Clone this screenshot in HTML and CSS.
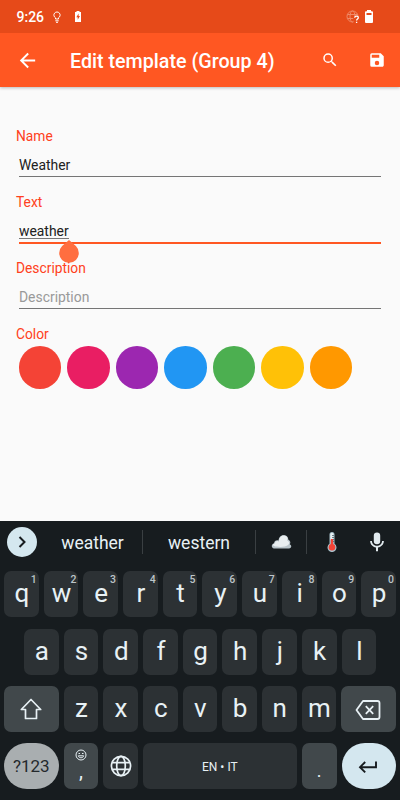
FILE: index.html
```html
<!DOCTYPE html>
<html lang="en">
<head>
  <meta charset="UTF-8">
  <meta name="viewport" content="width=device-width, initial-scale=1.0">
  <title>Edit template</title>
  <link rel="stylesheet" href="styles.css">
</head>
<body>
  <header>
    <div class="status-bar">
      <span class="time">9:26</span>
      <svg class="bulb" width="10" height="12" viewBox="0 0 10 12" fill="none" stroke="#fff" stroke-width="1"><path d="M3.500 8V6.800a3.100 3.100 0 1 1 3 0V8zM3.300 9.800h3.400M4 11.300h2"/></svg>
      <svg class="charge" width="8" height="11" viewBox="0 0 8 11"><path fill="#fff" d="M2.500 0h3v1H7v10H1V1h1.500z"/><path fill="#e64a19" d="M4.600 2.500L2.300 6.300h1.400v2.500L6 5H4.600z"/></svg>
      <svg class="network" width="15" height="14" viewBox="0 0 15 14" fill="none"><g stroke="#ef8a69"><circle cx="6.500" cy="6.500" r="5.500"/><ellipse cx="6.500" cy="6.500" rx="2.500" ry="5.500"/><path d="M1.500 4.500h10M1.500 8.500h6"/></g><path stroke="#e64a19" stroke-width="3" d="M9 8h4v5H9z"/><path stroke="#fff" stroke-width="1.300" d="M8.700 7.700c.1-2.200 3.700-2 3.600.1 0 1.300-1.700 1.300-1.700 2.800M10.600 11.700v1.300"/></svg>
      <svg width="8" height="13" viewBox="0 0 8 13"><path fill="#fff" d="M2 0h4v1.300h1a1 1 0 0 1 1 1V12a1 1 0 0 1-1 1H1a1 1 0 0 1-1-1V2.300a1 1 0 0 1 1-1h1z"/><path fill="#e64a19" d="M1.500 3h5v2h-5z"/></svg>
    </div>
    <div class="toolbar">
      <svg width="23" height="23" viewBox="0 0 24 24" fill="#fff"><path d="M20 11H7.830l5.590-5.590L12 4l-8 8 8 8 1.410-1.410L7.830 13H20z"/></svg>
      <h1>Edit template (Group 4)</h1>
      <svg class="search" width="18" height="18" viewBox="0 0 24 24" fill="#fff"><path d="M15.500 14h-.79l-.28-.27A6.470 6.470 0 0 0 16 9.500 6.500 6.500 0 1 0 9.500 16c1.610 0 3.090-.59 4.230-1.570l.27.28v.79l5 4.990L20.490 19zm-6 0a4.500 4.500 0 1 1 0-9 4.500 4.500 0 0 1 0 9z"/></svg>
      <svg width="18" height="18" viewBox="0 0 24 24" fill="#fff"><path d="M17 3H5a2 2 0 0 0-2 2v14a2 2 0 0 0 2 2h14c1.100 0 2-.9 2-2V7zm-5 16a3 3 0 1 1 0-6 3 3 0 0 1 0 6zm3-10H5V5h10z"/></svg>
    </div>
  </header>

  <main>
    <div class="field">
      <label>Name</label>
      <div class="input">Weather</div>
    </div>
    <div class="field">
      <label>Text</label>
      <div class="input focused"><span class="composing">weather<svg class="handle" width="20" height="23" viewBox="0 0 20 23"><path fill="#ff6e40" d="M10 0l6.900 6.100a9.800 9.800 0 1 1-13.800 0z"/></svg></span></div>
    </div>
    <div class="field">
      <label class="above">Description</label>
      <div class="input placeholder">Description</div>
    </div>
    <div class="field">
      <label>Color</label>
      <div class="colors">
        <span class="swatch red"></span>
        <span class="swatch pink"></span>
        <span class="swatch purple"></span>
        <span class="swatch blue"></span>
        <span class="swatch green"></span>
        <span class="swatch amber"></span>
        <span class="swatch orange"></span>
      </div>
    </div>
  </main>

  <section class="keyboard">
    <div class="suggestions">
      <div class="expand"><svg width="30" height="30" viewBox="0 0 30 30" fill="none" stroke="#171c1f" stroke-width="2"><path d="M12.500 10l5 5-5 5"/></svg></div>
      <div class="word first">weather</div>
      <div class="word second">western</div>
      <div class="word cloud"><svg width="21" height="16" viewBox="0 0 21 16"><path fill="#b9c4ca" d="M3 14.500C0 14 0 10 3 9.500c0-3 3-4 4.500-3C8 2 11 .8 13 1.200c3 .1 4.500 2.300 4.200 4.300 2.800 1.500 2.300 4 1.500 4.700 2.500 1 1.800 4-.7 4.300z"/><path fill="#e8edef" d="M3 12C1 11 2 9.500 4 9.500c0-2.500 3-3 4-1.800C8 3 11 1 13.500 1.600c2.800.5 3.500 2.700 2.700 4.900 2 .5 2.500 2.500 1.200 4.200C14 13.500 7 13.300 3 12z"/></svg></div>
      <div class="word thermo"><svg width="10" height="20" viewBox="0 0 10 20"><path fill="#a9c1cb" d="M2.500 2.500a2.500 2.500 0 0 1 5 0v9.300a4.500 4.500 0 1 1-5 0z"/><path fill="#e8f1f4" d="M3.400 2.500c0-2 3-2 3 0V8h-3z"/><path stroke="#f44336" stroke-width="2.400" d="M5 7v8"/><circle cx="5" cy="15.300" r="3.300" fill="#f44336"/><path stroke="#52636b" stroke-width=".8" d="M5 3.500h2M5 5.500h2M6 7.500h1.500M6 9.500h1.500"/></svg></div>
      <div class="mic"><svg width="22" height="22" viewBox="0 0 24 24" fill="#e1eaee"><path d="M12 14.500a3.500 3.500 0 0 0 3.500-3.500V5a3.500 3.500 0 0 0-7 0v6a3.500 3.500 0 0 0 3.500 3.500zm5.500-3.500c0 3-2.500 5.200-5.500 5.200S6.500 14 6.500 11h-2c0 3.600 2.800 6.600 6.400 7.100V22h2.200v-3.900c3.600-.5 6.400-3.500 6.400-7.100z"/></svg></div>
    </div>

    <div class="row">
      <div class="key">q<sup>1</sup></div>
      <div class="key">w<sup>2</sup></div>
      <div class="key">e<sup>3</sup></div>
      <div class="key">r<sup>4</sup></div>
      <div class="key">t<sup>5</sup></div>
      <div class="key">y<sup>6</sup></div>
      <div class="key">u<sup>7</sup></div>
      <div class="key">i<sup>8</sup></div>
      <div class="key">o<sup>9</sup></div>
      <div class="key">p<sup>0</sup></div>
    </div>
    <div class="row middle">
      <div class="key">a</div>
      <div class="key">s</div>
      <div class="key">d</div>
      <div class="key">f</div>
      <div class="key">g</div>
      <div class="key">h</div>
      <div class="key">j</div>
      <div class="key">k</div>
      <div class="key">l</div>
    </div>
    <div class="row">
      <div class="key wide special icon"><svg width="24" height="24" viewBox="0 0 24 24" fill="none" stroke="#e8f1f5" stroke-width="1.700" stroke-linejoin="round"><path d="M12 2.500L2.300 12.500h4.200v9h11v-9h4.200z"/></svg></div>
      <div class="key">z</div>
      <div class="key">x</div>
      <div class="key">c</div>
      <div class="key">v</div>
      <div class="key">b</div>
      <div class="key">n</div>
      <div class="key">m</div>
      <div class="key wide special icon"><svg class="backspace" width="26" height="22" viewBox="0 0 26 22" fill="none" stroke="#e8f1f5" stroke-width="1.800" stroke-linejoin="round"><path d="M8 2h14.500a2 2 0 0 1 2 2v14a2 2 0 0 1-2 2H8l-6.500-9z"/><path d="M10.800 7.200l7.400 7.600M18.200 7.200l-7.400 7.600"/></svg></div>
    </div>
    <div class="row">
      <div class="key wide symbols">?123</div>
      <div class="key special comma">
        <svg width="12" height="12" viewBox="0 0 12 12" fill="none" stroke="#e8f1f5"><circle cx="6" cy="6" r="5"/><path d="M3.300 6.800c.6 2.600 4.800 2.600 5.400 0zM3.500 4.500h1.500M7 4.500h1.500"/></svg>
        <span>,</span>
      </div>
      <div class="key icon"><svg width="22" height="22" viewBox="0 0 22 22" fill="none" stroke="#e8f1f5" stroke-width="1.700"><circle cx="11" cy="11" r="9.600"/><ellipse cx="11" cy="11" rx="4.300" ry="9.600"/><path d="M2.200 7.700h17.600M2.200 14.300h17.600"/></svg></div>
      <div class="key space">EN • IT</div>
      <div class="key special dot">.</div>
      <div class="key wide enter"><svg width="20" height="14" viewBox="0 0 20 14" fill="none" stroke="#171c1f" stroke-width="1.900"><path d="M18 1.500v5.700H2.500M7.200 2L2 7.200l5.200 5.200"/></svg></div>
    </div>
  </section>
</body>
</html>
```
FILE: styles.css
```css
* {
  margin: 0;
  padding: 0;
  box-sizing: border-box;
}

body {
  display: flex;
  flex-direction: column;
  height: 800px;
  overflow: hidden;
  font-family: Roboto, "Liberation Sans", sans-serif;
  background-color: #fafafa;
  color: #212121;
}

svg {
  display: block;
  flex: none;
}

header {
  color: white;
  box-shadow: 0 1px 3px rgba(0, 0, 0, 0.25);
}

.status-bar {
  display: flex;
  align-items: center;
  height: 33px;
  padding: 0 27px 0 16.5px;
  background-color: #e64a19;
}

.time {
  width: 27.5px;
  padding-top: 1px;
  font-size: 14px;
  font-weight: 500;
  white-space: nowrap;
}

.bulb {
  margin-left: 8px;
}

.charge {
  margin-left: 12px;
}

.network {
  margin-left: auto;
  margin-right: 4px;
}

.toolbar {
  display: flex;
  align-items: center;
  height: 54px;
  padding: 0 14.5px 0 15.5px;
  background-color: #ff5722;
}

h1 {
  margin-left: 31.5px;
  padding-top: 2px;
  font-size: 19.7px;
  font-weight: 500;
  white-space: nowrap;
}

.search {
  margin-left: auto;
  margin-right: 28.5px;
}

main {
  flex: 1;
  padding: 40px 16px 0;
}

.field {
  height: 66px;
}

label {
  display: block;
  height: 18px;
  font-size: 13.8px;
  line-height: 19px;
  color: #ff4020;
}

/* keeps the label readable over the selection handle */
.above {
  position: relative;
}

.input {
  height: 32px;
  margin: 0 3px;
  padding-top: 11px;
  border-bottom: 1px solid #757575;
  font-size: 13.9px;
  line-height: 18px;
}

.focused {
  height: 33px;
  border-bottom: 2px solid #ff5722;
}

.placeholder {
  color: #999;
}

.composing {
  position: relative;
  display: inline-block;
  height: 17px;
  border-bottom: 1px solid #777;
}

.handle {
  position: absolute;
  top: 18px;
  right: -10px;
}

.colors {
  display: flex;
  gap: 6px;
  padding: 3px 2.5px;
}

.swatch {
  width: 42.5px;
  height: 42.5px;
  border-radius: 50%;
}

.red { background-color: #f44336; }
.pink { background-color: #e91e63; }
.purple { background-color: #9c27b0; }
.blue { background-color: #2196f3; }
.green { background-color: #4caf50; }
.amber { background-color: #ffc107; }
.orange { background-color: #ff9800; }

.keyboard {
  display: flex;
  flex-direction: column;
  gap: 11.3px;
  height: 279px;
  padding: 0 4px;
  background-color: #171c1f;
  color: #e8f1f5;
}

.suggestions {
  display: flex;
  align-items: center;
  height: 39px;
  padding: 3px 0 0 3px;
}

.expand {
  width: 30px;
  height: 30px;
  border-radius: 50%;
  background-color: #d4e7ef;
}

.word {
  display: flex;
  align-items: center;
  justify-content: center;
  height: 24px;
  border-right: 1px solid #3a3f42;
  font-size: 17.5px;
}

.first {
  width: 106px;
  padding: 2px 0 0 6px;
}

.second {
  width: 113px;
  padding-top: 2px;
}

.cloud {
  width: 51px;
}

.thermo {
  width: 50px;
  border: none;
}

.mic {
  margin-left: 9px;
}

.row {
  display: flex;
  gap: 5px;
}

.middle {
  padding: 0 20px;
}

.key {
  position: relative;
  display: flex;
  flex: none;
  align-items: center;
  justify-content: center;
  width: 34.7px;
  height: 46px;
  padding: 0 0 2px 1px;
  border-radius: 7px;
  background-color: #2c3134;
  font-size: 26px;
  line-height: 28px;
}

.key sup {
  position: absolute;
  top: 2px;
  right: 2px;
  font-size: 10.5px;
  font-weight: 500;
  line-height: 13px;
  color: #bdc5c9;
}

.special {
  background-color: #41484b;
}

.icon {
  padding: 0;
}

.wide {
  width: 54.5px;
}

.symbols {
  border-radius: 23px;
  padding: 0;
  background-color: #a9aeb0;
  color: #24292c;
  font-size: 17px;
}

.backspace {
  margin-top: 2px;
  margin-right: 2px;
}

.comma {
  flex-direction: column;
  padding: 0 0 1px;
  font-size: 20px;
  line-height: 21px;
}

.space {
  flex: 1;
  padding: 1px 0 0;
  font-size: 12px;
}

.dot {
  padding: 10px 0 0;
  font-size: 18px;
}

.enter {
  padding: 1px 2px 0 0;
  border-radius: 23px;
  background-color: #d4e7ef;
}
```
